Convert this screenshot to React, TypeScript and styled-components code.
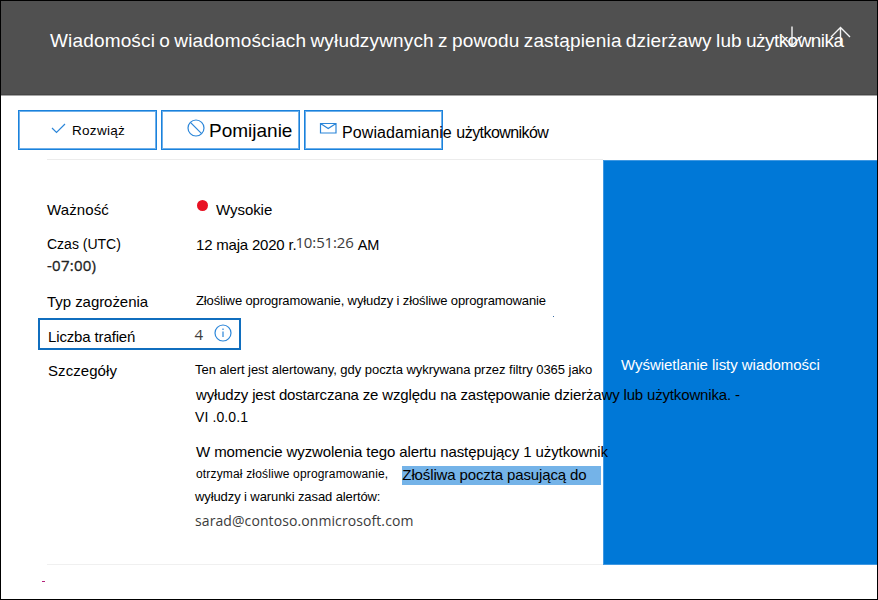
import React from 'react';
import styled, { createGlobalStyle } from 'styled-components';

const Global = createGlobalStyle`
  *, *::before, *::after { box-sizing: border-box; }
  body { margin: 0; background: #fff; }
`;

const Frame = styled.main`
  position: relative;
  width: 878px;
  height: 600px;
  overflow: hidden;
  border: 1px solid #000;
  background: #fff;
  color: #000;
  font-family: 'Liberation Sans', Arial, sans-serif;
  font-size: 15px;
  line-height: 22px;
`;

const Header = styled.header`
  position: relative;
  display: flex;
  height: 95px;
  padding: 28px 0 0 49px;
  background: #505050;
  border-bottom: 1px solid #a6a6a6;
  box-shadow: inset 0 -1px #464646;
`;

const Title = styled.h1`
  margin: 0;
  color: #fff;
  font-size: 19px;
  font-weight: 400;
  line-height: 24px;
  letter-spacing: 0.16px;
  word-spacing: -1.2px;
  white-space: nowrap;
`;

const Tight = styled.span`
  letter-spacing: -0.56px;
`;

const Arrows = styled.svg`
  position: absolute;
  left: 774px;
  top: 22px;
  width: 80px;
  height: 28px;
  fill: none;
  stroke: #f4f4f4;
  stroke-width: 1.4;
`;

const Toolbar = styled.nav`
  display: flex;
  gap: 4px;
  padding: 14px 0 0 17px;
`;

const ToolButton = styled.button<{ $pad: number; $gap: number }>`
  display: flex;
  align-items: flex-start;
  flex: none;
  gap: ${(p) => p.$gap}px;
  width: 139px;
  height: 40px;
  padding: 0 0 0 ${(p) => p.$pad + 1}px;
  border: 1px solid #1a82dc;
  box-shadow: inset 0 0 0 1px #6fb0ea;
  background: #fff;
  color: #000;
  font-family: inherit;
  white-space: nowrap;
`;

const ToolLabel = styled.span<{ $size: number; $space: number; $drop: number }>`
  margin-top: ${(p) => p.$drop + 1}px;
  font-size: ${(p) => p.$size}px;
  line-height: 22px;
  letter-spacing: ${(p) => p.$space}px;
`;

const ToolIcon = styled.svg`
  flex: none;
  width: 18px;
  height: 18px;
  margin-top: 8px;
  fill: none;
  stroke: #2b86d9;
  stroke-width: 1.2;
`;

const Content = styled.section`
  display: grid;
  grid-template-columns: 556px 1fr;
  height: 406px;
  margin: 9px 0 0 46px;
`;

const Details = styled.div`
  display: flex;
  flex-direction: column;
  padding-top: 39px;
  border-top: 1px solid #ececec;
  border-bottom: 1px solid #f0f0f0;
`;

const Row = styled.div<{ $height: number }>`
  display: grid;
  grid-template-columns: 149px 1fr;
  flex: none;
  height: ${(p) => p.$height}px;
`;

const HitRow = styled.div`
  display: grid;
  grid-template-columns: 155px 1fr;
  flex: none;
  width: 203px;
  height: 32px;
  margin: 0 0 10px -9px;
  padding-left: 8px;
  border: 2px solid #106ebe;
`;

const Stack = styled.div`
  display: flex;
  flex-direction: column;
  align-items: flex-start;
`;

const Inline = styled.div`
  display: flex;
  align-items: flex-start;
`;

const Text = styled.span<{ $size?: number; $space?: number; $drop?: number; $left?: number }>`
  display: block;
  margin-top: ${(p) => p.$drop ?? 0}px;
  margin-left: ${(p) => p.$left ?? 0}px;
  font-size: ${(p) => p.$size ?? 15}px;
  letter-spacing: ${(p) => p.$space ?? 0}px;
  white-space: nowrap;
`;

const HumanistText = styled(Text)`
  color: #3c3c3c;
  font-family: 'Open Sans', sans-serif;
`;

const Offset = styled(HumanistText)`
  color: #222;
  -webkit-text-stroke: 0.3px #222;
`;

const Dot = styled.span`
  width: 11px;
  height: 11px;
  margin: 1px 8px 0 1px;
  border-radius: 50%;
  background: #e81123;
`;

const InfoIcon = styled.svg`
  width: 18px;
  height: 18px;
  margin: 4px 0 0 11px;
  fill: none;
  stroke: #2b86d9;
  stroke-width: 1.2;
`;

const Highlight = styled.span`
  width: 199px;
  height: 19px;
  margin: 3px 0 0 14px;
  overflow: hidden;
  background: #74b3e8;
  line-height: 17px;
  letter-spacing: -0.13px;
  white-space: nowrap;
`;

const Panel = styled.aside`
  height: 405px;
  margin-top: 1px;
  padding: 193px 0 0 17px;
  border: 1px solid #3f98e2;
  border-right: 0;
  background: #0078d7;
  color: #fff;
`;

const OverPanel = styled.div`
  position: relative;
  z-index: 1;
`;

const Speck = styled.i<{ $x: number; $y: number; $width: number; $color: string }>`
  position: absolute;
  left: ${(p) => p.$x}px;
  top: ${(p) => p.$y}px;
  width: ${(p) => p.$width}px;
  height: 1px;
  background: ${(p) => p.$color};
`;

export default function App() {
  return (
    <Frame>
      <Global />
      <Header>
        <Title>
          Wiadomości o wiadomościach wyłudzywnych z powodu zastąpienia dzierżawy lub <Tight>użytkownika</Tight>
        </Title>
        <Arrows viewBox="0 0 80 28">
          <path d="M17 3.500V22M7 13L17 22.500L27 13" />
          <path d="M65.500 23V4.500M56 14L65.500 4.500L75 14" />
        </Arrows>
      </Header>
      <Toolbar>
        <ToolButton $pad={30} $gap={4}>
          <ToolIcon viewBox="0 0 18 18">
            <path d="M2 9L6.500 13.500L15 5" />
          </ToolIcon>
          <ToolLabel $size={13.5} $space={0.3} $drop={8}>Rozwiąż</ToolLabel>
        </ToolButton>
        <ToolButton $pad={24} $gap={4}>
          <ToolIcon viewBox="0 0 18 18">
            <circle cx="9" cy="9" r="8" />
            <path d="M3.400 3.400L14.600 14.600" />
          </ToolIcon>
          <ToolLabel $size={19} $space={0} $drop={8}>Pomijanie</ToolLabel>
        </ToolButton>
        <ToolButton $pad={13} $gap={5}>
          <ToolIcon viewBox="0 0 18 18">
            <path d="M1.500 4.500H17V14H1.500ZM1.500 4.500L9.200 9.500L17 4.500" />
          </ToolIcon>
          <ToolLabel $size={16} $space={0.1} $drop={10}>
            Powiadamianie <Tight>użytkowników</Tight>
          </ToolLabel>
        </ToolButton>
      </Toolbar>
      <Content>
        <Details>
          <Row $height={34}>
            <Text $space={0.12}>Ważność</Text>
            <Inline>
              <Dot />
              <Text $space={-0.05}>Wysokie</Text>
            </Inline>
          </Row>
          <Row $height={58}>
            <Stack>
              <Text $size={14}>Czas (UTC)</Text>
              <Offset $space={0.25} $drop={-1}>-07:00)</Offset>
            </Stack>
            <Inline>
              <Text $space={-0.2} $drop={1}>12 maja 2020 r.</Text>
              <HumanistText $space={-0.12} $drop={-2} $left={-1}>10:51:26</HumanistText>
              <Text $size={14.5} $left={4} $space={-0.3} $drop={1}>AM</Text>
            </Inline>
          </Row>
          <Row $height={27}>
            <Text $space={-0.05}>Typ zagrożenia</Text>
            <Text $size={13} $space={-0.12} $drop={-1}>Złośliwe oprogramowanie, wyłudzy i złośliwe oprogramowanie</Text>
          </Row>
          <HitRow>
            <Text $drop={6} $space={-0.14}>Liczba trafień</Text>
            <Inline>
              <HumanistText $drop={3} $left={-8.5}>4</HumanistText>
              <InfoIcon viewBox="0 0 18 18">
                <circle cx="9" cy="9" r="8" />
                <path d="M9 7.500V13M9 4.500V6" />
              </InfoIcon>
            </Inline>
          </HitRow>
          <Row $height={180}>
            <Text $space={0.07} $left={1}>Szczegóły</Text>
            <OverPanel>
              <Stack>
                <Text $size={13} $space={-0.04} $drop={-1} $left={-1}>
                  Ten alert jest alertowany, gdy poczta wykrywana przez filtry 0365 jako
                </Text>
                <Text $space={-0.165} $drop={3}>
                  wyłudzy jest dostarczana ze względu na zastępowanie dzierżawy lub użytkownika. -
                </Text>
                <Text $size={14} $space={0.1} $left={-1}>VI .0.0.1</Text>
                <Text $space={-0.1} $drop={13}>
                  W momencie wyzwolenia tego alertu następujący 1 użytkownik
                </Text>
                <Inline>
                  <Text $size={12} $space={0.17}>otrzymał złośliwe oprogramowanie,</Text>
                  <Highlight>Złośliwa poczta pasującą do</Highlight>
                </Inline>
                <Text $size={13} $space={-0.1} $drop={1} $left={-1}>wyłudzy i warunki zasad alertów:</Text>
                <HumanistText $size={14} $space={0.09} $drop={2} $left={-1}>sarad@contoso.onmicrosoft.com</HumanistText>
              </Stack>
            </OverPanel>
          </Row>
        </Details>
        <Panel>
          <Text $space={-0.04}>Wyświetlanie listy wiadomości</Text>
        </Panel>
      </Content>
      <Speck $x={552} $y={315} $width={1} $color="#3a6ea5" />
      <Speck $x={41} $y={580} $width={3} $color="#b4237a" />
    </Frame>
  );
}
